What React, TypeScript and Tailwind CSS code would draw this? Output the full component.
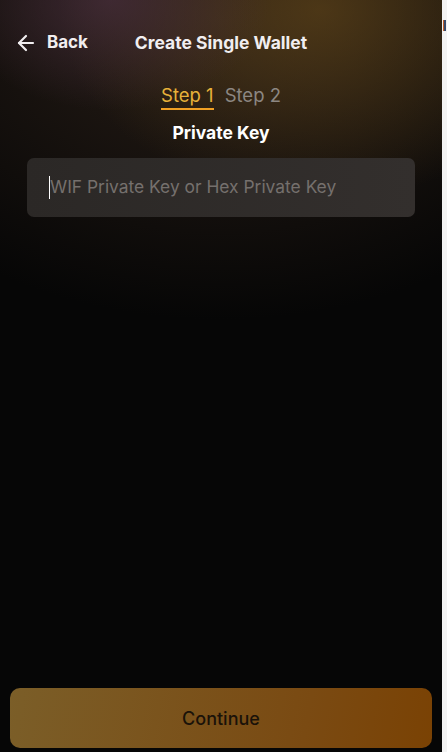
import { ArrowLeft } from 'lucide-react';

export default function App() {
    return (
        <div className="flex h-[752px] w-[447px] overflow-hidden bg-[#f3f3f3] font-['Inter',sans-serif]">
            <div className="relative flex h-full w-[442px] flex-col bg-[#060606] bg-[radial-gradient(ellipse_160px_110px_at_110px_0px,rgba(70,45,60,0.75),transparent),radial-gradient(ellipse_260px_190px_at_320px_10px,rgba(105,75,25,0.6),transparent),radial-gradient(ellipse_420px_300px_at_220px_20px,rgba(55,40,30,0.7),transparent)]">
                {/* Header */}
                <div className="grid grid-cols-[1fr_auto_1fr] items-center px-[14px] pt-[30px]">
                    <button className="flex items-center gap-[9px] text-[17px] font-bold text-[#f1eef0]">
                        <ArrowLeft className="h-[24px] w-[24px]" strokeWidth={2.2} />
                        Back
                    </button>
                    <h1 className="text-[17.5px] font-bold text-[#f1eef0]">Create Single Wallet</h1>
                    <div />
                </div>

                {/* Steps */}
                <div className="mt-[26px] flex justify-center gap-[11px] text-[18.5px] leading-[26px]">
                    <span className="border-b-2 border-[#f0a024] text-[#e8b23a]">Step 1</span>
                    <span className="text-[#8c8782]">Step 2</span>
                </div>

                <div className="mt-[10px] text-center text-[17.5px] font-bold text-white">Private Key</div>

                {/* Input */}
                <div className="mx-[27px] mt-[11px] flex h-[59px] items-center rounded-[7px] bg-[linear-gradient(90deg,#2b2826,#332f2d)] px-[22px]">
                    <span className="h-[23px] w-px bg-white" />
                    <span className="text-[17.4px] text-[#75706d]">WIF Private Key or Hex Private Key</span>
                </div>

                <div className="flex-1" />

                {/* Continue */}
                <button className="mx-[10px] mb-[4px] h-[60px] rounded-[10px] bg-[linear-gradient(100deg,#7b5e28,#7a4a12_70%,#7a4204)] text-[18px] font-medium text-[#1a1209]">
                    Continue
                </button>
            </div>
            <div className="flex-1 pt-[20px]">
                <div className="ml-[1px] h-[11px] w-[3px] border-l border-[#c0602a] bg-[#3a4a6a]" />
            </div>
        </div>
    );
}
